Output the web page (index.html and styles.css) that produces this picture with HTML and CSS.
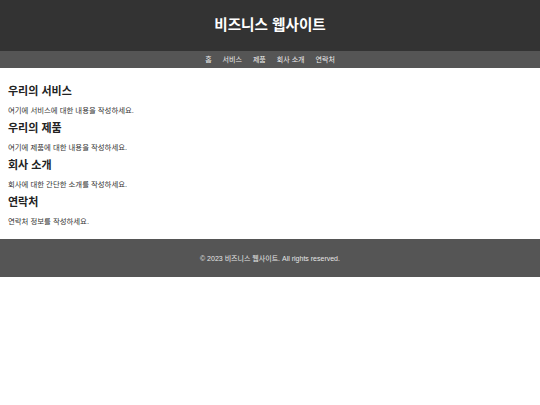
FILE: index.html
```html
<!DOCTYPE html>
<html lang="ko">
<head>
<meta charset="utf-8">
<title>비즈니스 웹사이트</title>
<link rel="stylesheet" href="styles.css">
</head>
<body>
<header class="site-header">
  <h1 class="site-title">비즈니스 웹사이트</h1>
</header>
<nav class="site-nav">
  <a href="#" class="nav-link">홈</a>
  <a href="#" class="nav-link">서비스</a>
  <a href="#" class="nav-link">제품</a>
  <a href="#" class="nav-link">회사 소개</a>
  <a href="#" class="nav-link">연락처</a>
</nav>
<main class="content">
  <section class="section">
    <h2 class="section-title">우리의 서비스</h2>
    <p class="section-text">여기에 서비스에 대한 내용을 작성하세요.</p>
  </section>
  <section class="section">
    <h2 class="section-title">우리의 제품</h2>
    <p class="section-text">여기에 제품에 대한 내용을 작성하세요.</p>
  </section>
  <section class="section">
    <h2 class="section-title">회사 소개</h2>
    <p class="section-text">회사에 대한 간단한 소개를 작성하세요.</p>
  </section>
  <section class="section">
    <h2 class="section-title">연락처</h2>
    <p class="section-text">연락처 정보를 작성하세요.</p>
  </section>
</main>
<footer class="site-footer">
  <p class="footer-text">© 2023 비즈니스 웹사이트. All rights reserved.</p>
</footer>
</body>
</html>
```

FILE: styles.css
```css
html, body {
  margin: 0;
  padding: 0;
  background: #fff;
}
body {
  font-family: "Liberation Sans", "Noto Sans CJK KR", sans-serif;
  color: #222;
}
.site-header {
  background: #333;
  color: #fff;
  height: 51px;
  display: flex;
  align-items: center;
  justify-content: center;
}
.site-title {
  margin: 0;
  font-size: 14.6px;
  line-height: 17px;
  font-weight: bold;
}
.site-nav {
  background: #555;
  height: 17px;
  display: flex;
  align-items: center;
  justify-content: center;
  gap: 11px;
}
.nav-link {
  color: #eee;
  text-decoration: none;
  font-size: 7px;
  line-height: 9px;
}
.content {
  padding: 17px 8px 6px;
}
.section-title {
  margin: 0 0 8px;
  font-size: 11px;
  line-height: 13px;
  font-weight: bold;
}
.section-text {
  margin: 0 0 7px;
  font-size: 7.4px;
  line-height: 9px;
  color: #333;
}
.site-footer {
  background: #555;
  color: #e6e6e6;
  height: 38px;
  display: flex;
  align-items: center;
  justify-content: center;
}
.footer-text {
  margin: 0;
  font-size: 7px;
  line-height: 9px;
}
```
